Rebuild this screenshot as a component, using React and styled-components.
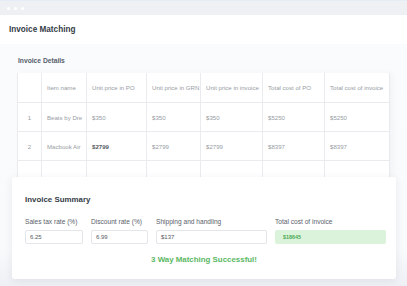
import React from 'react';
import styled, { createGlobalStyle } from 'styled-components';

const Global = createGlobalStyle`
	html, body {
		margin: 0;
		padding: 0;
		background: #eef1f6;
	}
	body {
		font-family: "Liberation Sans", Arial, sans-serif;
	}
`;

const Window = styled.div`
	width: 407px;
	height: 286px;
	overflow: hidden;
	display: flex;
	flex-direction: column;
	background: #f8f9fb;
	border-top: 1px solid #e6ecf7;
	box-sizing: border-box;
`;
const TopBar = styled.div`
	height: 14px;
	flex: none;
	background: #eef0f3;
	display: flex;
	align-items: center;
	gap: 4px;
	padding-left: 7px;
`;
const Dot = styled.span`
	width: 3px;
	height: 3px;
	border-radius: 50%;
	background: #ffffff;
`;
const Header = styled.div`
	height: 29px;
	flex: none;
	background: #ffffff;
	display: flex;
	align-items: center;
	padding-left: 9px;
	font-size: 8.2px;
	font-weight: 700;
	color: #353b47;
	box-shadow: 0 1px 3px rgba(30, 40, 60, 0.04);
`;
const Content = styled.div`
	flex: 1;
	padding: 13px 0 0 17px;
	background: linear-gradient(180deg, #fafbfc 0%, #f9fafc 85%, #eef0f5 100%);
`;
const SectionTitle = styled.div`
	font-size: 6.7px;
	line-height: 8px;
	font-weight: 700;
	color: #555d6d;
	padding-left: 1px;
	margin-bottom: 8px;
`;
const Table = styled.div`
	width: 373px;
	background: #ffffff;
	border-left: 1px solid #e9ebef;
	box-sizing: border-box;
	box-shadow: 3px 0 6px rgba(30, 40, 60, 0.03);
`;
const Row = styled.div`
	display: grid;
	grid-template-columns: 24px 45px 60px 54px 62px 62px 65px;
	height: ${(p) => (p.$head ? 30 : 29)}px;
	border-bottom: 1px solid #e9ebef;
	box-sizing: border-box;
`;
const Cell = styled.div`
	display: flex;
	align-items: center;
	justify-content: ${(p) => (p.$center ? 'center' : 'flex-start')};
	padding-left: ${(p) => (p.$center ? 0 : 5)}px;
	border-right: 1px solid #e9ebef;
	font-size: 6.1px;
	color: ${(p) => (p.$strong ? '#555a63' : '#979ca4')};
	font-weight: ${(p) => (p.$strong ? 700 : 400)};
	white-space: nowrap;
`;
const SummaryCard = styled.div`
	position: relative;
	z-index: 1;
	margin: -13px 0 0 -5px;
	width: 384px;
	background: #ffffff;
	border-radius: 3px;
	box-shadow: 0 2px 8px rgba(30, 40, 70, 0.08);
	padding: 18px 13px 14px;
	box-sizing: border-box;
`;
const CardTitle = styled.div`
	font-size: 7.9px;
	line-height: 10px;
	font-weight: 700;
	color: #353b47;
`;
const Fields = styled.div`
	display: grid;
	grid-template-columns: 58px 57px 111px 111px;
	column-gap: 8px;
	margin-top: 12px;
`;
const Field = styled.div`
	display: flex;
	flex-direction: column;
	gap: 3px;
`;
const Label = styled.div`
	font-size: 6.6px;
	line-height: 10px;
	color: #5b616b;
	white-space: nowrap;
`;
const Input = styled.div`
	height: 14px;
	box-sizing: border-box;
	border: 1px solid ${(p) => (p.$ok ? '#daf3da' : '#e3e6eb')};
	background: ${(p) => (p.$ok ? '#daf3da' : '#ffffff')};
	border-radius: 2px;
	display: flex;
	align-items: center;
	padding-left: ${(p) => (p.$ok ? 7 : 4)}px;
	font-size: ${(p) => (p.$ok ? 5.4 : 6)}px;
	color: ${(p) => (p.$ok ? '#4daa55' : '#555a63')};
	font-weight: ${(p) => (p.$ok ? 700 : 400)};
`;
const Success = styled.div`
	margin-top: 11px;
	text-align: center;
	font-size: 7.9px;
	line-height: 10px;
	font-weight: 700;
	color: #5bb863;
`;

const head = ['', 'Item name', 'Unit price in PO', 'Unit price in GRN', 'Unit price in invoice', 'Total cost of PO', 'Total cost of invoice'];
const rows = [
	['1', 'Beats by Dre', '$350', '$350', '$350', '$5250', '$5250'],
	['2', 'Macbook Air', '$2799', '$2799', '$2799', '$8397', '$8397'],
	['', '', '', '', '', '', ''],
];
const fields = [
	{ label: 'Sales tax rate (%)', value: '6.25' },
	{ label: 'Discount rate (%)', value: '6.99' },
	{ label: 'Shipping and handling', value: '$137' },
	{ label: 'Total cost of invoice', value: '$18645', ok: true },
];

export default () => (
	<>
		<Global />
		<Window>
			<TopBar>
				<Dot />
				<Dot />
				<Dot />
			</TopBar>
			<Header>Invoice Matching</Header>
			<Content>
				<SectionTitle>Invoice Details</SectionTitle>
				<Table>
					<Row $head>
						{head.map((h, i) => (
							<Cell key={i}>{h}</Cell>
						))}
					</Row>
					{rows.map((r, ri) => (
						<Row key={ri}>
							{r.map((c, ci) => (
								<Cell key={ci} $center={ci === 0} $strong={ri === 1 && ci === 2}>
									{c}
								</Cell>
							))}
						</Row>
					))}
				</Table>
				<SummaryCard>
					<CardTitle>Invoice Summary</CardTitle>
					<Fields>
						{fields.map((f) => (
							<Field key={f.label}>
								<Label>{f.label}</Label>
								<Input $ok={f.ok}>{f.value}</Input>
							</Field>
						))}
					</Fields>
					<Success>3 Way Matching Successful!</Success>
				</SummaryCard>
			</Content>
		</Window>
	</>
);
